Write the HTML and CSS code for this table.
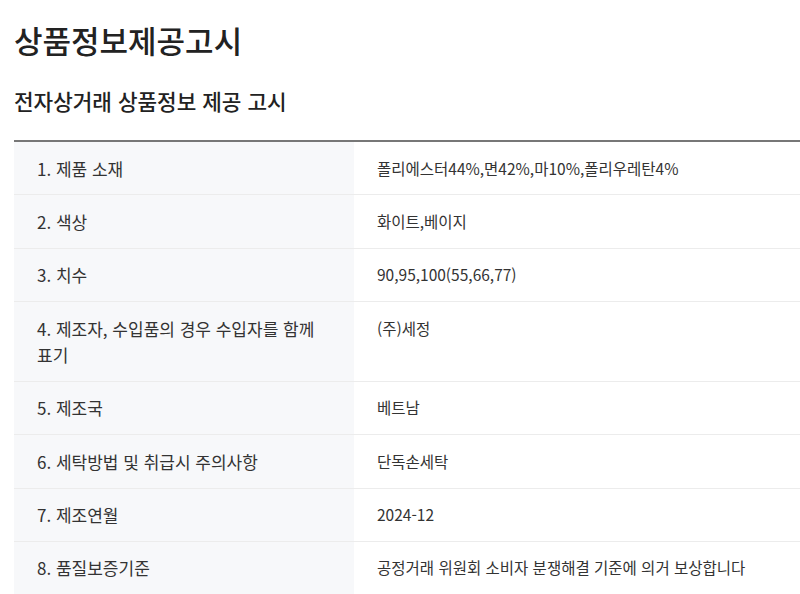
FILE: index.html
```html
<!DOCTYPE html>
<html lang="ko">
<head>
<meta charset="utf-8">
<link rel="stylesheet" href="styles.css">
</head>
<body>
<div class="page">
  <h1 class="title">상품정보제공고시</h1>
  <h2 class="subtitle">전자상거래 상품정보 제공 고시</h2>
  <table class="info">
    <tbody>
      <tr><th>1. 제품 소재</th><td>폴리에스터44%,면42%,마10%,폴리우레탄4%</td></tr>
      <tr><th>2. 색상</th><td>화이트,베이지</td></tr>
      <tr><th>3. 치수</th><td>90,95,100(55,66,77)</td></tr>
      <tr><th>4. 제조자, 수입품의 경우 수입자를 함께 표기</th><td>(주)세정</td></tr>
      <tr><th>5. 제조국</th><td>베트남</td></tr>
      <tr><th>6. 세탁방법 및 취급시 주의사항</th><td>단독손세탁</td></tr>
      <tr><th>7. 제조연월</th><td>2024-12</td></tr>
      <tr><th>8. 품질보증기준</th><td>공정거래 위원회 소비자 분쟁해결 기준에 의거 보상합니다</td></tr>
    </tbody>
  </table>
</div>
</body>
</html>
```
FILE: styles.css
```css
html, body {
  margin: 0;
  padding: 0;
  background: #fff;
}
body {
  font-family: "Noto Sans CJK KR", "Noto Sans", sans-serif;
  color: #333;
}
.page {
  padding: 0 0 0 14px;
}
.title {
  margin: 20px 0 0;
  font-size: 31px;
  line-height: 40px;
  font-weight: 500;
  color: #222;
}
.subtitle {
  margin: 27px 0 0;
  font-size: 21.3px;
  line-height: 28px;
  font-weight: 500;
  color: #222;
}
.info {
  margin-top: 25px;
  width: 786px;
  border-collapse: collapse;
  border-top: 2px solid #777;
}
.info th, .info td {
  text-align: left;
  vertical-align: top;
  line-height: 25.6px;
  padding: 13.5px 23px 13.4px;
  border-bottom: 1px solid #ececec;
  color: #333;
}
.info th {
  width: 294px;
  font-size: 17px;
  font-weight: 400;
  background: #f7f8fa;
}
.info td {
  font-size: 15.5px;
  background: #fff;
}
```
